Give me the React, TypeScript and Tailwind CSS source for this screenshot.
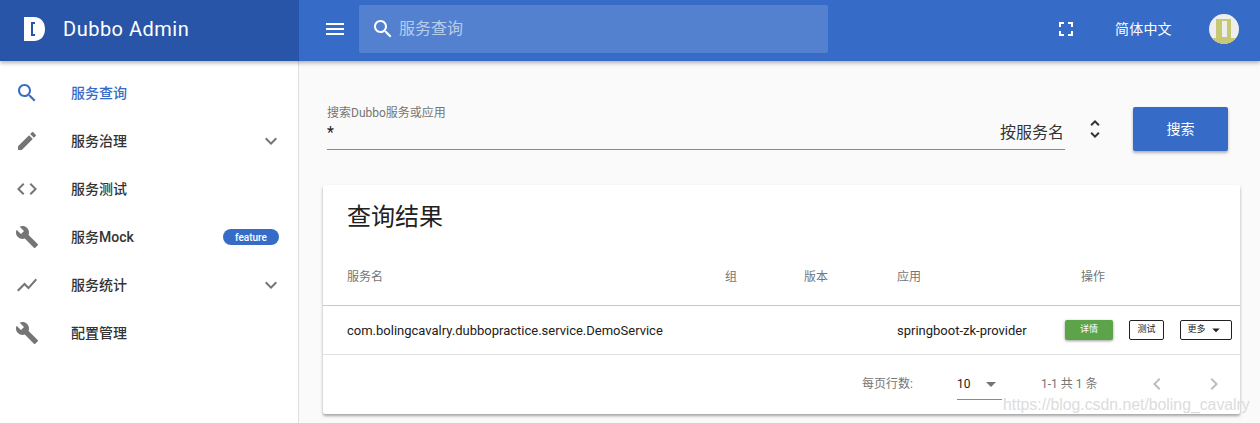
const PATHS = {
  search:
    "M15.5 14h-.79l-.28-.27C15.41 12.59 16 11.11 16 9.5 16 5.91 13.09 3 9.5 3S3 5.91 3 9.5 5.91 16 9.5 16c1.61 0 3.09-.59 4.23-1.57l.27.28v.79l5 4.99L20.49 19l-4.99-5zm-6 0C7.01 14 5 11.99 5 9.5S7.01 5 9.5 5 14 7.01 14 9.5 11.99 14 9.5 14z",
  edit: "M3 17.25V21h3.75L17.81 9.94l-3.75-3.75L3 17.25zM20.71 7.04c.39-.39.39-1.02 0-1.41l-2.34-2.34c-.39-.39-1.02-.39-1.41 0l-1.83 1.83 3.75 3.75 1.83-1.83z",
  code: "M9.4 16.6L4.8 12l4.6-4.6L8 6l-6 6 6 6 1.4-1.4zm5.2 0l4.6-4.6-4.6-4.6L16 6l6 6-6 6-1.4-1.4z",
  build:
    "M22.7 19l-9.1-9.1c.9-2.3.4-5-1.5-6.9-2-2-5-2.4-7.4-1.3L9 6 6 9 1.6 4.7C.4 7.1.9 10.1 2.9 12.1c1.9 1.9 4.6 2.4 6.9 1.5l9.1 9.1c.4.4 1 .4 1.4 0l2.3-2.3c.5-.4.5-1.1.1-1.4z",
  chart: "M3.5 18.49l6-6.01 4 4L22 6.92l-1.41-1.41-7.09 7.97-4-4L2 16.99z",
  fullscreen:
    "M7 14H5v5h5v-2H7v-3zm-2-4h2V7h3V5H5v5zm12 7h-3v2h5v-5h-2v3zM14 5v2h3v3h2V5h-5z",
  menu: "M3 18h18v-2H3v2zm0-5h18v-2H3v2zm0-7v2h18V6H3z",
  expand: "M7.41 8.59L12 13.17l4.59-4.58L18 10l-6 6-6-6 1.41-1.41z",
  unfold:
    "M12 5.83L15.17 9l1.41-1.41L12 3 7.41 7.59 8.83 9 12 5.83zm0 12.34L8.83 15l-1.41 1.41L12 21l4.59-4.59L15.17 15 12 18.17z",
  dropdown: "M7 10l5 5 5-5z",
  left: "M15.41 7.41L14 6l-6 6 6 6 1.41-1.41L10.83 12z",
  right: "M10 6L8.59 7.41 13.17 12l-4.58 4.59L10 18l6-6z",
};

function Icon(props: { name: keyof typeof PATHS; className: string }) {
  return (
    <svg viewBox="0 0 24 24" fill="currentColor" className={props.className}>
      <path d={PATHS[props.name]} />
    </svg>
  );
}

const NAV_ITEMS: {
  icon: keyof typeof PATHS;
  label: string;
  expand?: boolean;
  badge?: string;
}[] = [
  { icon: "search", label: "服务查询" },
  { icon: "edit", label: "服务治理", expand: true },
  { icon: "code", label: "服务测试" },
  { icon: "build", label: "服务Mock", badge: "feature" },
  { icon: "chart", label: "服务统计", expand: true },
  { icon: "build", label: "配置管理" },
];

function NavRow(props: { item: (typeof NAV_ITEMS)[number]; active: boolean }) {
  const { item, active } = props;
  return (
    <div className="flex h-12 items-center pl-[15px] pr-[15px]">
      <Icon
        name={item.icon}
        className={`h-6 w-6 shrink-0 ${active ? "text-[#366cc8]" : "text-[#757575]"}`}
      />
      <span
        className={`ml-[32px] flex-1 text-[14px] font-medium ${active ? "text-[#366cc8]" : "text-[#333333]"}`}
      >
        {item.label}
      </span>
      {item.expand && <Icon name="expand" className="h-6 w-6 text-[#757575]" />}
      {item.badge && (
        <span className="mr-[4px] flex h-4 w-14 items-center justify-center rounded-full bg-[#366cc8] text-[10px] font-medium text-white">
          {item.badge}
        </span>
      )}
    </div>
  );
}

const COLUMNS = "grid grid-cols-[378px_79px_93px_184px_1fr] pl-6";

export default function App() {
  return (
    <div className="relative flex h-[423px] w-[1260px] flex-col overflow-hidden bg-[#fafafa] font-['Roboto','Noto_Sans_CJK_SC',sans-serif]">
      <header className="z-10 flex h-[61px] shrink-0 bg-[#366cc8] text-white shadow-[0_2px_4px_rgba(0,0,0,0.3)]">
        <div className="flex w-[299px] items-center bg-[#2955a8] pb-[3px] pl-[24px]">
          <svg viewBox="0 0 21 24" className="h-[24px] w-[21px]">
            <path
              fill="#ffffff"
              fillRule="evenodd"
              d="M0 0H10C17 0 21 5 21 12S17 24 10 24H0ZM7 5V19H11V17H9V7H11V5Z"
            />
          </svg>
          <span className="ml-[18px] text-[20px] tracking-[0.5px]">Dubbo Admin</span>
        </div>
        <div className="flex flex-1 items-center pb-[3px]">
          <Icon name="menu" className="ml-6 h-6 w-6" />
          <div className="ml-[12px] flex h-12 w-[469px] items-center rounded-[2px] bg-white/15 pl-[12px]">
            <Icon name="search" className="h-6 w-6" />
            <span className="ml-[4px] text-[16px] text-white/60">服务查询</span>
          </div>
          <Icon name="fullscreen" className="ml-[226px] h-6 w-6" />
          <span className="ml-[37px] text-[14px] tracking-[0.2px]">简体中文</span>
          <div className="relative ml-[37px] h-[30px] w-[30px] overflow-hidden rounded-full bg-[#eeeeee]">
            <div className="absolute bottom-0 left-[7px] top-[5px] w-[15px] bg-[#c6c873]" />
            <div className="absolute bottom-0 left-0 h-[6px] w-full bg-[#c6c873]" />
            <div className="absolute bottom-[7px] left-[13px] top-[7px] w-[5px] bg-[#eeeeee]" />
          </div>
        </div>
      </header>

      <div className="flex min-h-0 flex-1">
        <aside className="w-[299px] shrink-0 border-r border-[#e0e0e0] bg-white pt-2">
          {NAV_ITEMS.map((item, index) => (
            <NavRow active={index === 0} item={item} key={item.label} />
          ))}
        </aside>

        <main className="min-w-0 flex-1 pl-[24px] pr-[20px]">
          <div className="flex h-[124px] items-start pt-[46px] pl-[4px]">
            <div className="h-[43px] w-[738px] border-b border-[#8a8a8a]">
              <p className="text-[12px] leading-[12px] text-[#757575]">
                搜索Dubbo服务或应用
              </p>
              <div className="mt-[4px] flex items-center justify-between pr-[1px]">
                <span className="text-[16px] leading-[20px] text-[#212121]">*</span>
                <span className="text-[16px] leading-[20px] text-[#333333]">
                  按服务名
                </span>
              </div>
            </div>
            <Icon name="unfold" className="ml-[18px] mt-[10px] h-6 w-6 text-[#333333]" />
            <button
              className="ml-[26px] mt-0 h-11 w-[95px] rounded-[2px] bg-[#366cc8] text-[14px] text-white shadow-[0_2px_3px_rgba(0,0,0,0.3)]"
              type="button"
            >
              搜索
            </button>
          </div>

          <section className="h-[229px] rounded-[2px] bg-white shadow-[0_2px_3px_rgba(0,0,0,0.35)]">
            <h2 className="pl-6 pt-[16px] text-[24px] leading-[32px] text-[#212121]">
              查询结果
            </h2>
            <div className={`${COLUMNS} mt-[16px] h-[57px] items-center border-b border-[#c8c8c8] text-[12px] text-[#757575]`}>
              <span>服务名</span>
              <span>组</span>
              <span>版本</span>
              <span>应用</span>
              <span>操作</span>
            </div>
            <div className={`${COLUMNS} h-[49px] items-center border-b border-[#e0e0e0] text-[13px] text-[#212121]`}>
              <span className="pt-[2px]">com.bolingcavalry.dubbopractice.service.DemoService</span>
              <span />
              <span />
              <span className="pt-[2px]">springboot-zk-provider</span>
              <div className="-ml-4 flex items-center">
                <button
                  className="h-5 w-12 rounded-[2px] bg-[#5ca34a] text-[9px] text-white shadow-[0_1px_3px_rgba(0,0,0,0.4)]"
                  type="button"
                >
                  详情
                </button>
                <button
                  className="ml-4 h-5 w-[35px] rounded-[2px] border border-[#212121] text-[9px] text-[#212121]"
                  type="button"
                >
                  测试
                </button>
                <button
                  className="ml-4 flex h-5 w-[52px] items-center justify-center gap-[1px] rounded-[2px] border border-[#212121] text-[9px] text-[#212121]"
                  type="button"
                >
                  更多
                  <Icon name="dropdown" className="h-[18px] w-[18px]" />
                </button>
              </div>
            </div>
            <div className="flex h-[59px] items-center pb-[2px] text-[12px] text-[#757575]">
              <span className="ml-[539px]">每页行数:</span>
              <div className="ml-[44px] flex h-[32px] w-[45px] items-center justify-between border-b border-[#8a8a8a] pt-[1px] text-[12px] text-[#212121]">
                <span>10</span>
                <Icon name="dropdown" className="mr-[-1px] h-6 w-6 text-[#757575]" />
              </div>
              <span className="ml-[39px]">1-1 共 1 条</span>
              <Icon name="left" className="ml-[48px] h-6 w-6 text-[#bdbdbd]" />
              <Icon name="right" className="ml-[33px] h-6 w-6 text-[#bdbdbd]" />
            </div>
          </section>
        </main>
      </div>

      <span className="absolute left-[1003px] top-[396px] z-20 font-['Liberation_Sans',sans-serif] text-[15.8px] leading-[18px] text-[#dcdcdc]">
        https://blog.csdn.net/boling_cavalry
      </span>
    </div>
  );
}
